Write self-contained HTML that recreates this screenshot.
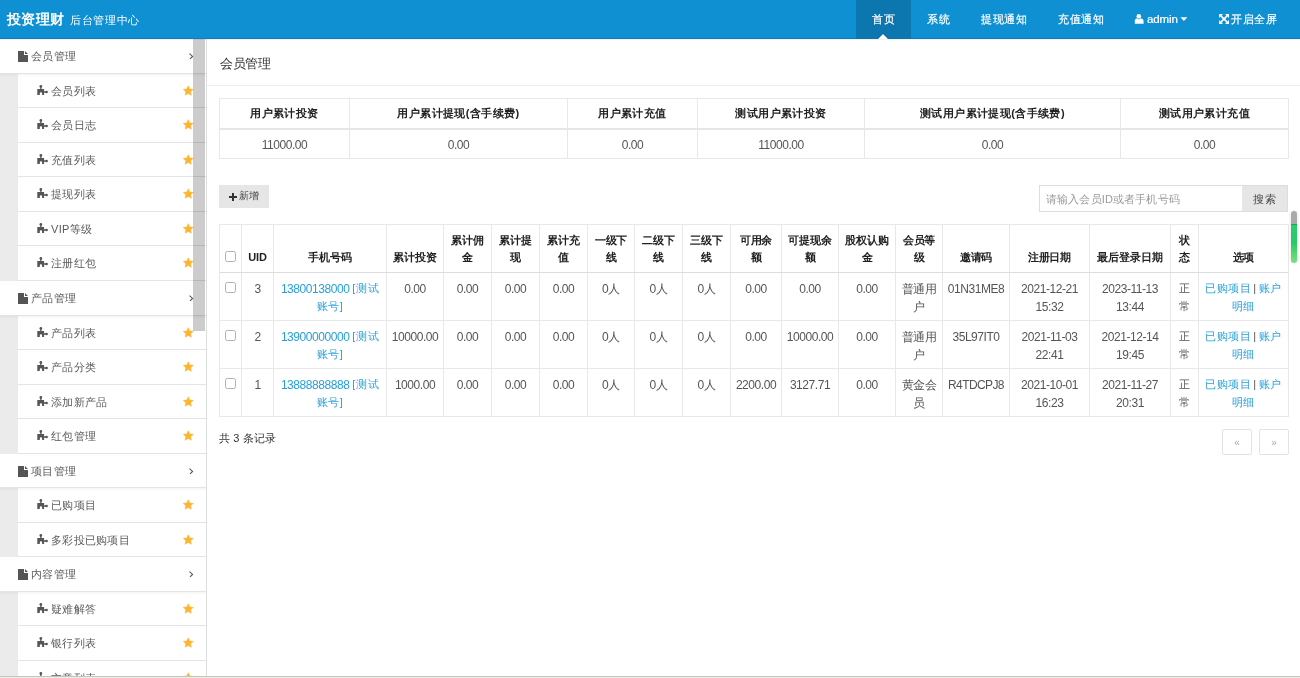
<!DOCTYPE html><html><head><meta charset="utf-8"><style>
*{box-sizing:border-box;margin:0;padding:0}
html,body{width:1300px;height:678px;overflow:hidden;background:#fff}
body{font-family:"Liberation Sans",sans-serif;font-size:12px;color:#555;position:relative;letter-spacing:-0.5px}
.n{font-size:12px;letter-spacing:-0.45px;position:relative;top:1px}
#hdr{position:absolute;left:0;top:0;width:1300px;height:39px;background:#0e90d2;color:#fff;border-bottom:1px solid #0a80c2;z-index:2}
#hsh{position:absolute;left:0;top:39px;width:1300px;height:1px;background:rgba(0,0,0,0.05);z-index:3}
#logo{position:absolute;left:7px;top:9px;font-size:14px;font-weight:bold;white-space:nowrap;line-height:20px;letter-spacing:0.4px}
#logo small{font-size:11px;font-weight:normal;margin-left:5.5px;letter-spacing:0.6px}
.nv{position:absolute;top:0;height:39px;line-height:38px;font-size:11px;white-space:nowrap;color:#fff;letter-spacing:0.7px;-webkit-text-stroke:0.2px #fff}
.act{background:#0c76ae}
.tri{position:absolute;left:21px;bottom:0;width:0;height:0;border-left:6.5px solid transparent;border-right:6.5px solid transparent;border-bottom:6.5px solid #0a659e}.tri2{position:absolute;left:22px;bottom:0;width:0;height:0;border-left:5.5px solid transparent;border-right:5.5px solid transparent;border-bottom:5.5px solid #fff}
#side{position:absolute;left:0;top:39px;width:207px;height:639px;border-right:1px solid #ddd;overflow:hidden;background:#ebebeb}
.row{position:absolute;left:0;width:206px;border-bottom:1px solid #e4e4e4;background:#fff}
.row.sub{left:18px;width:188px}
.row span{position:absolute;white-space:nowrap}
.lbl{color:#5a5a5a;font-size:11px;line-height:16px;letter-spacing:0.3px}
#sbar{position:absolute;left:193px;top:0;width:12px;height:292px;background:rgba(0,0,0,0.2)}
#main{position:absolute;left:207px;top:39px;width:1093px;height:637px}
.abs{position:absolute;white-space:nowrap}
#root{position:absolute;left:0;top:0;width:1300px;height:678px;overflow:hidden;will-change:transform;background:#fff}
table{border-collapse:collapse;table-layout:fixed;position:absolute}
td,th{border:1px solid #e3e3e3;text-align:center;vertical-align:middle;padding:0;overflow:hidden;white-space:nowrap}
th{font-weight:bold;color:#222;font-size:11px;letter-spacing:-0.1px}
td{color:#555}
a{color:#27a0d9;text-decoration:none}
.st th{height:30px;border:1px solid #e8e8e8;border-bottom:2px solid #e6e6e6;font-size:11px;letter-spacing:0.4px;line-height:17px;color:#222;padding-top:1px}
.st td{height:30px;border:1px solid #e8e8e8;font-size:12px;line-height:17px;color:#555;padding-top:2px}
.btn{background:#e6e6e6}
.mt th{height:48px;border:1px solid #e8e8e8;border-bottom:1px solid #ddd;font-size:11px;line-height:17.6px;color:#222;vertical-align:bottom;padding-bottom:5px}
.mt td{height:48px;border:1px solid #e8e8e8;font-size:11px;letter-spacing:0.6px;line-height:17.6px;color:#555;vertical-align:top;padding-top:7px}
.cb{display:inline-block;width:11px;height:11px;border:1px solid #b0b0b0;border-radius:2.5px;background:#fff;position:relative;top:1px}
.pg{width:30px;height:26px;letter-spacing:0;border:1px solid #e3e3e3;border-radius:2px;text-align:center;line-height:25px;color:#aaa;font-size:10px}

</style></head><body><div id="root">
<div id="hdr"><div id="logo">投资理财<small>后台管理中心</small></div>
<div class="nv act" style="left:856px;width:55px;padding-left:16px">首页<i class="tri"></i><i class="tri2"></i></div>
<div class="nv" style="left:927px">系统</div>
<div class="nv" style="left:981px">提现通知</div>
<div class="nv" style="left:1058px">充值通知</div>
<svg class="abs" style="left:1134px;top:13px" width="10" height="11" viewBox="0 0 10 11"><circle cx="4.8" cy="3.3" r="2.3" fill="#fff"/><path d="M0.8 10.7V7.9C0.8 6.3 2 5.4 3.2 5.3L4.8 6.4L6.4 5.3C7.6 5.4 9.6 6.3 9.6 7.9V10.7Z" fill="#fff"/></svg>
<div class="nv" style="left:1147px;font-size:11.5px;letter-spacing:-0.1px;line-height:39px">admin</div>
<svg class="abs" style="left:1180px;top:17px" width="8" height="5" viewBox="0 0 8 5"><path d="M0.4 0.3H7.4L3.9 4Z" fill="#fff"/></svg>
<svg class="abs" style="left:1218px;top:13px" width="12" height="12" viewBox="0 0 12 12"><path d="M1 1H5L3.6 2.4L6 4.8L8.4 2.4L7 1H11V5L9.6 3.6L7.2 6L9.6 8.4L11 7V11H7L8.4 9.6L6 7.2L3.6 9.6L5 11H1V7L2.4 8.4L4.8 6L2.4 3.6L1 5Z" fill="#fff"/></svg>
<div class="nv" style="left:1231px">开启全屏</div>
</div><div id="hsh"></div>
<div id="side">
<div class="row" style="top:0.20px;height:34.54px">
<svg width="10" height="11" viewBox="0 0 10 11" style="position:absolute;left:18px;top:12px"><path d="M0 0H6V4H10V11H0Z M7 0L10 3H7Z" fill="#555"/></svg>
<span class="lbl" style="left:31px;top:9px">会员管理</span>
<svg width="10" height="10" viewBox="0 0 10 10" style="position:absolute;left:186px;top:12px"><path d="M3.5 2.7L6.6 5.4L4.0 7.9" fill="none" stroke="#555" stroke-width="1.1"/></svg>
</div>
<div style="position:absolute;left:0;top:34.74px;width:206px;height:3px;background:linear-gradient(rgba(0,0,0,0.045),rgba(0,0,0,0));z-index:1"></div>
<div class="row sub" style="top:34.74px;height:34.54px">
<svg width="12" height="11" viewBox="0 0 12 11" style="position:absolute;left:19px;top:11px"><path d="M0.3 4H7.1V9.9H5.1V8.3A1.15 1.15 0 0 0 2.8 8.3V9.9H0.3Z M3.2 1.4H4.5V4H3.2Z M7.1 6.35H9.6V7.65H7.1Z" fill="#555"/><circle cx="3.85" cy="1.45" r="1.35" fill="#555"/><circle cx="9.6" cy="7" r="1.3" fill="#555"/></svg>
<span class="lbl" style="left:33px;top:9px">会员列表</span>
<svg width="16" height="16" viewBox="0 0 16 16" style="position:absolute;left:160px;top:9px"><path d="M10.25 2.70 L11.75 5.94 L15.29 6.36 L12.68 8.79 L13.37 12.29 L10.25 10.55 L7.13 12.29 L7.82 8.79 L5.21 6.36 L8.75 5.94Z" fill="#fdb530" stroke="#fdb530" stroke-width="0.5" stroke-linejoin="round"/></svg>
</div>
<div class="row sub" style="top:69.28px;height:34.54px">
<svg width="12" height="11" viewBox="0 0 12 11" style="position:absolute;left:19px;top:11px"><path d="M0.3 4H7.1V9.9H5.1V8.3A1.15 1.15 0 0 0 2.8 8.3V9.9H0.3Z M3.2 1.4H4.5V4H3.2Z M7.1 6.35H9.6V7.65H7.1Z" fill="#555"/><circle cx="3.85" cy="1.45" r="1.35" fill="#555"/><circle cx="9.6" cy="7" r="1.3" fill="#555"/></svg>
<span class="lbl" style="left:33px;top:9px">会员日志</span>
<svg width="16" height="16" viewBox="0 0 16 16" style="position:absolute;left:160px;top:9px"><path d="M10.25 2.70 L11.75 5.94 L15.29 6.36 L12.68 8.79 L13.37 12.29 L10.25 10.55 L7.13 12.29 L7.82 8.79 L5.21 6.36 L8.75 5.94Z" fill="#fdb530" stroke="#fdb530" stroke-width="0.5" stroke-linejoin="round"/></svg>
</div>
<div class="row sub" style="top:103.82px;height:34.54px">
<svg width="12" height="11" viewBox="0 0 12 11" style="position:absolute;left:19px;top:11px"><path d="M0.3 4H7.1V9.9H5.1V8.3A1.15 1.15 0 0 0 2.8 8.3V9.9H0.3Z M3.2 1.4H4.5V4H3.2Z M7.1 6.35H9.6V7.65H7.1Z" fill="#555"/><circle cx="3.85" cy="1.45" r="1.35" fill="#555"/><circle cx="9.6" cy="7" r="1.3" fill="#555"/></svg>
<span class="lbl" style="left:33px;top:9px">充值列表</span>
<svg width="16" height="16" viewBox="0 0 16 16" style="position:absolute;left:160px;top:9px"><path d="M10.25 2.70 L11.75 5.94 L15.29 6.36 L12.68 8.79 L13.37 12.29 L10.25 10.55 L7.13 12.29 L7.82 8.79 L5.21 6.36 L8.75 5.94Z" fill="#fdb530" stroke="#fdb530" stroke-width="0.5" stroke-linejoin="round"/></svg>
</div>
<div class="row sub" style="top:138.36px;height:34.54px">
<svg width="12" height="11" viewBox="0 0 12 11" style="position:absolute;left:19px;top:11px"><path d="M0.3 4H7.1V9.9H5.1V8.3A1.15 1.15 0 0 0 2.8 8.3V9.9H0.3Z M3.2 1.4H4.5V4H3.2Z M7.1 6.35H9.6V7.65H7.1Z" fill="#555"/><circle cx="3.85" cy="1.45" r="1.35" fill="#555"/><circle cx="9.6" cy="7" r="1.3" fill="#555"/></svg>
<span class="lbl" style="left:33px;top:9px">提现列表</span>
<svg width="16" height="16" viewBox="0 0 16 16" style="position:absolute;left:160px;top:9px"><path d="M10.25 2.70 L11.75 5.94 L15.29 6.36 L12.68 8.79 L13.37 12.29 L10.25 10.55 L7.13 12.29 L7.82 8.79 L5.21 6.36 L8.75 5.94Z" fill="#fdb530" stroke="#fdb530" stroke-width="0.5" stroke-linejoin="round"/></svg>
</div>
<div class="row sub" style="top:172.90px;height:34.54px">
<svg width="12" height="11" viewBox="0 0 12 11" style="position:absolute;left:19px;top:11px"><path d="M0.3 4H7.1V9.9H5.1V8.3A1.15 1.15 0 0 0 2.8 8.3V9.9H0.3Z M3.2 1.4H4.5V4H3.2Z M7.1 6.35H9.6V7.65H7.1Z" fill="#555"/><circle cx="3.85" cy="1.45" r="1.35" fill="#555"/><circle cx="9.6" cy="7" r="1.3" fill="#555"/></svg>
<span class="lbl" style="left:33px;top:9px">VIP等级</span>
<svg width="16" height="16" viewBox="0 0 16 16" style="position:absolute;left:160px;top:9px"><path d="M10.25 2.70 L11.75 5.94 L15.29 6.36 L12.68 8.79 L13.37 12.29 L10.25 10.55 L7.13 12.29 L7.82 8.79 L5.21 6.36 L8.75 5.94Z" fill="#fdb530" stroke="#fdb530" stroke-width="0.5" stroke-linejoin="round"/></svg>
</div>
<div class="row sub" style="top:207.44px;height:34.54px">
<svg width="12" height="11" viewBox="0 0 12 11" style="position:absolute;left:19px;top:11px"><path d="M0.3 4H7.1V9.9H5.1V8.3A1.15 1.15 0 0 0 2.8 8.3V9.9H0.3Z M3.2 1.4H4.5V4H3.2Z M7.1 6.35H9.6V7.65H7.1Z" fill="#555"/><circle cx="3.85" cy="1.45" r="1.35" fill="#555"/><circle cx="9.6" cy="7" r="1.3" fill="#555"/></svg>
<span class="lbl" style="left:33px;top:9px">注册红包</span>
<svg width="16" height="16" viewBox="0 0 16 16" style="position:absolute;left:160px;top:9px"><path d="M10.25 2.70 L11.75 5.94 L15.29 6.36 L12.68 8.79 L13.37 12.29 L10.25 10.55 L7.13 12.29 L7.82 8.79 L5.21 6.36 L8.75 5.94Z" fill="#fdb530" stroke="#fdb530" stroke-width="0.5" stroke-linejoin="round"/></svg>
</div>
<div class="row" style="top:241.98px;height:34.54px">
<svg width="10" height="11" viewBox="0 0 10 11" style="position:absolute;left:18px;top:12px"><path d="M0 0H6V4H10V11H0Z M7 0L10 3H7Z" fill="#555"/></svg>
<span class="lbl" style="left:31px;top:9px">产品管理</span>
<svg width="10" height="10" viewBox="0 0 10 10" style="position:absolute;left:186px;top:12px"><path d="M3.5 2.7L6.6 5.4L4.0 7.9" fill="none" stroke="#555" stroke-width="1.1"/></svg>
</div>
<div style="position:absolute;left:0;top:276.52px;width:206px;height:3px;background:linear-gradient(rgba(0,0,0,0.045),rgba(0,0,0,0));z-index:1"></div>
<div class="row sub" style="top:276.52px;height:34.54px">
<svg width="12" height="11" viewBox="0 0 12 11" style="position:absolute;left:19px;top:11px"><path d="M0.3 4H7.1V9.9H5.1V8.3A1.15 1.15 0 0 0 2.8 8.3V9.9H0.3Z M3.2 1.4H4.5V4H3.2Z M7.1 6.35H9.6V7.65H7.1Z" fill="#555"/><circle cx="3.85" cy="1.45" r="1.35" fill="#555"/><circle cx="9.6" cy="7" r="1.3" fill="#555"/></svg>
<span class="lbl" style="left:33px;top:9px">产品列表</span>
<svg width="16" height="16" viewBox="0 0 16 16" style="position:absolute;left:160px;top:9px"><path d="M10.25 2.70 L11.75 5.94 L15.29 6.36 L12.68 8.79 L13.37 12.29 L10.25 10.55 L7.13 12.29 L7.82 8.79 L5.21 6.36 L8.75 5.94Z" fill="#fdb530" stroke="#fdb530" stroke-width="0.5" stroke-linejoin="round"/></svg>
</div>
<div class="row sub" style="top:311.06px;height:34.54px">
<svg width="12" height="11" viewBox="0 0 12 11" style="position:absolute;left:19px;top:11px"><path d="M0.3 4H7.1V9.9H5.1V8.3A1.15 1.15 0 0 0 2.8 8.3V9.9H0.3Z M3.2 1.4H4.5V4H3.2Z M7.1 6.35H9.6V7.65H7.1Z" fill="#555"/><circle cx="3.85" cy="1.45" r="1.35" fill="#555"/><circle cx="9.6" cy="7" r="1.3" fill="#555"/></svg>
<span class="lbl" style="left:33px;top:9px">产品分类</span>
<svg width="16" height="16" viewBox="0 0 16 16" style="position:absolute;left:160px;top:9px"><path d="M10.25 2.70 L11.75 5.94 L15.29 6.36 L12.68 8.79 L13.37 12.29 L10.25 10.55 L7.13 12.29 L7.82 8.79 L5.21 6.36 L8.75 5.94Z" fill="#fdb530" stroke="#fdb530" stroke-width="0.5" stroke-linejoin="round"/></svg>
</div>
<div class="row sub" style="top:345.60px;height:34.54px">
<svg width="12" height="11" viewBox="0 0 12 11" style="position:absolute;left:19px;top:11px"><path d="M0.3 4H7.1V9.9H5.1V8.3A1.15 1.15 0 0 0 2.8 8.3V9.9H0.3Z M3.2 1.4H4.5V4H3.2Z M7.1 6.35H9.6V7.65H7.1Z" fill="#555"/><circle cx="3.85" cy="1.45" r="1.35" fill="#555"/><circle cx="9.6" cy="7" r="1.3" fill="#555"/></svg>
<span class="lbl" style="left:33px;top:9px">添加新产品</span>
<svg width="16" height="16" viewBox="0 0 16 16" style="position:absolute;left:160px;top:9px"><path d="M10.25 2.70 L11.75 5.94 L15.29 6.36 L12.68 8.79 L13.37 12.29 L10.25 10.55 L7.13 12.29 L7.82 8.79 L5.21 6.36 L8.75 5.94Z" fill="#fdb530" stroke="#fdb530" stroke-width="0.5" stroke-linejoin="round"/></svg>
</div>
<div class="row sub" style="top:380.14px;height:34.54px">
<svg width="12" height="11" viewBox="0 0 12 11" style="position:absolute;left:19px;top:11px"><path d="M0.3 4H7.1V9.9H5.1V8.3A1.15 1.15 0 0 0 2.8 8.3V9.9H0.3Z M3.2 1.4H4.5V4H3.2Z M7.1 6.35H9.6V7.65H7.1Z" fill="#555"/><circle cx="3.85" cy="1.45" r="1.35" fill="#555"/><circle cx="9.6" cy="7" r="1.3" fill="#555"/></svg>
<span class="lbl" style="left:33px;top:9px">红包管理</span>
<svg width="16" height="16" viewBox="0 0 16 16" style="position:absolute;left:160px;top:9px"><path d="M10.25 2.70 L11.75 5.94 L15.29 6.36 L12.68 8.79 L13.37 12.29 L10.25 10.55 L7.13 12.29 L7.82 8.79 L5.21 6.36 L8.75 5.94Z" fill="#fdb530" stroke="#fdb530" stroke-width="0.5" stroke-linejoin="round"/></svg>
</div>
<div class="row" style="top:414.68px;height:34.54px">
<svg width="10" height="11" viewBox="0 0 10 11" style="position:absolute;left:18px;top:12px"><path d="M0 0H6V4H10V11H0Z M7 0L10 3H7Z" fill="#555"/></svg>
<span class="lbl" style="left:31px;top:9px">项目管理</span>
<svg width="10" height="10" viewBox="0 0 10 10" style="position:absolute;left:186px;top:12px"><path d="M3.5 2.7L6.6 5.4L4.0 7.9" fill="none" stroke="#555" stroke-width="1.1"/></svg>
</div>
<div style="position:absolute;left:0;top:449.22px;width:206px;height:3px;background:linear-gradient(rgba(0,0,0,0.045),rgba(0,0,0,0));z-index:1"></div>
<div class="row sub" style="top:449.22px;height:34.54px">
<svg width="12" height="11" viewBox="0 0 12 11" style="position:absolute;left:19px;top:11px"><path d="M0.3 4H7.1V9.9H5.1V8.3A1.15 1.15 0 0 0 2.8 8.3V9.9H0.3Z M3.2 1.4H4.5V4H3.2Z M7.1 6.35H9.6V7.65H7.1Z" fill="#555"/><circle cx="3.85" cy="1.45" r="1.35" fill="#555"/><circle cx="9.6" cy="7" r="1.3" fill="#555"/></svg>
<span class="lbl" style="left:33px;top:9px">已购项目</span>
<svg width="16" height="16" viewBox="0 0 16 16" style="position:absolute;left:160px;top:9px"><path d="M10.25 2.70 L11.75 5.94 L15.29 6.36 L12.68 8.79 L13.37 12.29 L10.25 10.55 L7.13 12.29 L7.82 8.79 L5.21 6.36 L8.75 5.94Z" fill="#fdb530" stroke="#fdb530" stroke-width="0.5" stroke-linejoin="round"/></svg>
</div>
<div class="row sub" style="top:483.76px;height:34.54px">
<svg width="12" height="11" viewBox="0 0 12 11" style="position:absolute;left:19px;top:11px"><path d="M0.3 4H7.1V9.9H5.1V8.3A1.15 1.15 0 0 0 2.8 8.3V9.9H0.3Z M3.2 1.4H4.5V4H3.2Z M7.1 6.35H9.6V7.65H7.1Z" fill="#555"/><circle cx="3.85" cy="1.45" r="1.35" fill="#555"/><circle cx="9.6" cy="7" r="1.3" fill="#555"/></svg>
<span class="lbl" style="left:33px;top:9px">多彩投已购项目</span>
<svg width="16" height="16" viewBox="0 0 16 16" style="position:absolute;left:160px;top:9px"><path d="M10.25 2.70 L11.75 5.94 L15.29 6.36 L12.68 8.79 L13.37 12.29 L10.25 10.55 L7.13 12.29 L7.82 8.79 L5.21 6.36 L8.75 5.94Z" fill="#fdb530" stroke="#fdb530" stroke-width="0.5" stroke-linejoin="round"/></svg>
</div>
<div class="row" style="top:518.30px;height:34.54px">
<svg width="10" height="11" viewBox="0 0 10 11" style="position:absolute;left:18px;top:12px"><path d="M0 0H6V4H10V11H0Z M7 0L10 3H7Z" fill="#555"/></svg>
<span class="lbl" style="left:31px;top:9px">内容管理</span>
<svg width="10" height="10" viewBox="0 0 10 10" style="position:absolute;left:186px;top:12px"><path d="M3.5 2.7L6.6 5.4L4.0 7.9" fill="none" stroke="#555" stroke-width="1.1"/></svg>
</div>
<div style="position:absolute;left:0;top:552.84px;width:206px;height:3px;background:linear-gradient(rgba(0,0,0,0.045),rgba(0,0,0,0));z-index:1"></div>
<div class="row sub" style="top:552.84px;height:34.54px">
<svg width="12" height="11" viewBox="0 0 12 11" style="position:absolute;left:19px;top:11px"><path d="M0.3 4H7.1V9.9H5.1V8.3A1.15 1.15 0 0 0 2.8 8.3V9.9H0.3Z M3.2 1.4H4.5V4H3.2Z M7.1 6.35H9.6V7.65H7.1Z" fill="#555"/><circle cx="3.85" cy="1.45" r="1.35" fill="#555"/><circle cx="9.6" cy="7" r="1.3" fill="#555"/></svg>
<span class="lbl" style="left:33px;top:9px">疑难解答</span>
<svg width="16" height="16" viewBox="0 0 16 16" style="position:absolute;left:160px;top:9px"><path d="M10.25 2.70 L11.75 5.94 L15.29 6.36 L12.68 8.79 L13.37 12.29 L10.25 10.55 L7.13 12.29 L7.82 8.79 L5.21 6.36 L8.75 5.94Z" fill="#fdb530" stroke="#fdb530" stroke-width="0.5" stroke-linejoin="round"/></svg>
</div>
<div class="row sub" style="top:587.38px;height:34.54px">
<svg width="12" height="11" viewBox="0 0 12 11" style="position:absolute;left:19px;top:11px"><path d="M0.3 4H7.1V9.9H5.1V8.3A1.15 1.15 0 0 0 2.8 8.3V9.9H0.3Z M3.2 1.4H4.5V4H3.2Z M7.1 6.35H9.6V7.65H7.1Z" fill="#555"/><circle cx="3.85" cy="1.45" r="1.35" fill="#555"/><circle cx="9.6" cy="7" r="1.3" fill="#555"/></svg>
<span class="lbl" style="left:33px;top:9px">银行列表</span>
<svg width="16" height="16" viewBox="0 0 16 16" style="position:absolute;left:160px;top:9px"><path d="M10.25 2.70 L11.75 5.94 L15.29 6.36 L12.68 8.79 L13.37 12.29 L10.25 10.55 L7.13 12.29 L7.82 8.79 L5.21 6.36 L8.75 5.94Z" fill="#fdb530" stroke="#fdb530" stroke-width="0.5" stroke-linejoin="round"/></svg>
</div>
<div class="row sub" style="top:621.92px;height:34.54px">
<svg width="12" height="11" viewBox="0 0 12 11" style="position:absolute;left:19px;top:11px"><path d="M0.3 4H7.1V9.9H5.1V8.3A1.15 1.15 0 0 0 2.8 8.3V9.9H0.3Z M3.2 1.4H4.5V4H3.2Z M7.1 6.35H9.6V7.65H7.1Z" fill="#555"/><circle cx="3.85" cy="1.45" r="1.35" fill="#555"/><circle cx="9.6" cy="7" r="1.3" fill="#555"/></svg>
<span class="lbl" style="left:33px;top:9px">文章列表</span>
<svg width="16" height="16" viewBox="0 0 16 16" style="position:absolute;left:160px;top:9px"><path d="M10.25 2.70 L11.75 5.94 L15.29 6.36 L12.68 8.79 L13.37 12.29 L10.25 10.55 L7.13 12.29 L7.82 8.79 L5.21 6.36 L8.75 5.94Z" fill="#fdb530" stroke="#fdb530" stroke-width="0.5" stroke-linejoin="round"/></svg>
</div>
<div class="row sub" style="top:656.46px;height:34.54px">
<svg width="12" height="11" viewBox="0 0 12 11" style="position:absolute;left:19px;top:11px"><path d="M0.3 4H7.1V9.9H5.1V8.3A1.15 1.15 0 0 0 2.8 8.3V9.9H0.3Z M3.2 1.4H4.5V4H3.2Z M7.1 6.35H9.6V7.65H7.1Z" fill="#555"/><circle cx="3.85" cy="1.45" r="1.35" fill="#555"/><circle cx="9.6" cy="7" r="1.3" fill="#555"/></svg>
<span class="lbl" style="left:33px;top:9px">x</span>
<svg width="16" height="16" viewBox="0 0 16 16" style="position:absolute;left:160px;top:9px"><path d="M10.25 2.70 L11.75 5.94 L15.29 6.36 L12.68 8.79 L13.37 12.29 L10.25 10.55 L7.13 12.29 L7.82 8.79 L5.21 6.36 L8.75 5.94Z" fill="#fdb530" stroke="#fdb530" stroke-width="0.5" stroke-linejoin="round"/></svg>
</div>
<div id="sbar"></div>
</div>
<div class="abs" style="left:220px;top:55px;font-size:13px;line-height:18px;color:#333">会员管理</div>
<div class="abs" style="left:207px;top:85px;width:1093px;height:1px;background:#eee"></div>
<table class="st" style="left:219px;top:98px;width:1070px"><colgroup>
<col style="width:130px">
<col style="width:218px">
<col style="width:130px">
<col style="width:167px">
<col style="width:256px">
<col style="width:168px">
</colgroup><tr>
<th class="sh">用户累计投资</th>
<th class="sh">用户累计提现(含手续费)</th>
<th class="sh">用户累计充值</th>
<th class="sh">测试用户累计投资</th>
<th class="sh">测试用户累计提现(含手续费)</th>
<th class="sh">测试用户累计充值</th>
</tr><tr>
<td class="sd"><span class="n">11000.00</span></td>
<td class="sd"><span class="n">0.00</span></td>
<td class="sd"><span class="n">0.00</span></td>
<td class="sd"><span class="n">11000.00</span></td>
<td class="sd"><span class="n">0.00</span></td>
<td class="sd"><span class="n">0.00</span></td>
</tr></table>
<div class="abs btn" style="left:219px;top:185px;width:50px;height:23px"><svg width="8" height="8" viewBox="0 0 8 8" style="position:absolute;left:10px;top:7.5px"><path d="M3 0H5V3H8V5H5V8H3V5H0V3H3Z" fill="#333"/></svg><span style="position:absolute;left:20px;top:4px;font-size:10px;line-height:14px;color:#444;letter-spacing:0">新增</span></div>
<div class="abs" style="left:1039px;top:185px;width:204px;height:27px;border:1px solid #ddd;background:#fff"><span style="position:absolute;left:6px;top:5px;font-size:11px;line-height:17px;color:#999;letter-spacing:0.15px">请输入会员ID或者手机号码</span></div>
<div class="abs" style="left:1242px;top:185px;width:46px;height:27px;border:1px solid #ddd;border-left:0;background:#e6e6e6"><span style="position:absolute;left:11px;top:5px;font-size:11px;line-height:17px;color:#444;letter-spacing:0.6px">搜索</span></div>
<table class="mt" style="left:219px;top:224px;width:1070px"><colgroup>
<col style="width:22px">
<col style="width:32px">
<col style="width:113px">
<col style="width:57px">
<col style="width:48px">
<col style="width:48px">
<col style="width:48px">
<col style="width:47px">
<col style="width:48px">
<col style="width:48px">
<col style="width:51px">
<col style="width:57px">
<col style="width:57px">
<col style="width:47px">
<col style="width:67px">
<col style="width:80px">
<col style="width:81px">
<col style="width:28px">
<col style="width:90px">
</colgroup><tr class="mh">
<th><i class="cb"></i></th>
<th>UID</th>
<th>手机号码</th>
<th>累计投资</th>
<th>累计佣<br>金</th>
<th>累计提<br>现</th>
<th>累计充<br>值</th>
<th>一级下<br>线</th>
<th>二级下<br>线</th>
<th>三级下<br>线</th>
<th>可用余<br>额</th>
<th>可提现余<br>额</th>
<th>股权认购<br>金</th>
<th>会员等<br>级</th>
<th>邀请码</th>
<th>注册日期</th>
<th>最后登录日期</th>
<th>状<br>态</th>
<th>选项</th>
</tr>
<tr class="mr">
<td><i class="cb"></i></td>
<td><span class="n">3</span></td>
<td><a><span class="n">13800138000 </span>[测试<br>账号]</a></td>
<td><span class="n">0.00</span></td>
<td><span class="n">0.00</span></td>
<td><span class="n">0.00</span></td>
<td><span class="n">0.00</span></td>
<td><span class="n">0人</span></td>
<td><span class="n">0人</span></td>
<td><span class="n">0人</span></td>
<td><span class="n">0.00</span></td>
<td><span class="n">0.00</span></td>
<td><span class="n">0.00</span></td>
<td><span class="n">普通用<br>户</span></td>
<td><span class="n">01N31ME8</span></td>
<td><span class="n">2021-12-21<br>15:32</span></td>
<td><span class="n">2023-11-13<br>13:44</span></td>
<td>正<br>常</td>
<td style="letter-spacing:0.4px;word-spacing:-1.2px"><a>已购项目</a> | <a>账户<br>明细</a></td>
</tr>
<tr class="mr">
<td><i class="cb"></i></td>
<td><span class="n">2</span></td>
<td><a><span class="n">13900000000 </span>[测试<br>账号]</a></td>
<td><span class="n">10000.00</span></td>
<td><span class="n">0.00</span></td>
<td><span class="n">0.00</span></td>
<td><span class="n">0.00</span></td>
<td><span class="n">0人</span></td>
<td><span class="n">0人</span></td>
<td><span class="n">0人</span></td>
<td><span class="n">0.00</span></td>
<td><span class="n">10000.00</span></td>
<td><span class="n">0.00</span></td>
<td><span class="n">普通用<br>户</span></td>
<td><span class="n">35L97IT0</span></td>
<td><span class="n">2021-11-03<br>22:41</span></td>
<td><span class="n">2021-12-14<br>19:45</span></td>
<td>正<br>常</td>
<td style="letter-spacing:0.4px;word-spacing:-1.2px"><a>已购项目</a> | <a>账户<br>明细</a></td>
</tr>
<tr class="mr">
<td><i class="cb"></i></td>
<td><span class="n">1</span></td>
<td><a><span class="n">13888888888 </span>[测试<br>账号]</a></td>
<td><span class="n">1000.00</span></td>
<td><span class="n">0.00</span></td>
<td><span class="n">0.00</span></td>
<td><span class="n">0.00</span></td>
<td><span class="n">0人</span></td>
<td><span class="n">0人</span></td>
<td><span class="n">0人</span></td>
<td><span class="n">2200.00</span></td>
<td><span class="n">3127.71</span></td>
<td><span class="n">0.00</span></td>
<td><span class="n">黄金会<br>员</span></td>
<td><span class="n"><span style="letter-spacing:-0.6px">R4TDCPJ8</span></span></td>
<td><span class="n">2021-10-01<br>16:23</span></td>
<td><span class="n">2021-11-27<br>20:31</span></td>
<td>正<br>常</td>
<td style="letter-spacing:0.4px;word-spacing:-1.2px"><a>已购项目</a> | <a>账户<br>明细</a></td>
</tr>
</table>
<div class="abs" style="left:219px;top:430px;font-size:11px;line-height:17px;color:#333;letter-spacing:0.1px">共 3 条记录</div>
<div class="abs pg" style="left:1222px;top:429px">&laquo;</div>
<div class="abs pg" style="left:1259px;top:429px">&raquo;</div>
<div class="abs" style="left:1291px;top:211px;width:6px;height:52px;border-radius:3px;background:linear-gradient(#a9a9a9 0,#a9a9a9 25%,#1f8f4a 25%,#2ecc71 28%,#27c964 60%,#7ae07a 100%);box-shadow:0 0 3px rgba(0,0,0,0.15)"></div>
<div class="abs" style="left:0;top:676px;width:1300px;height:1px;background:#c4c4bc"></div>
<div class="abs" style="left:0;top:677px;width:1300px;height:1px;background:#eef0e4"></div>
</div></body></html>
